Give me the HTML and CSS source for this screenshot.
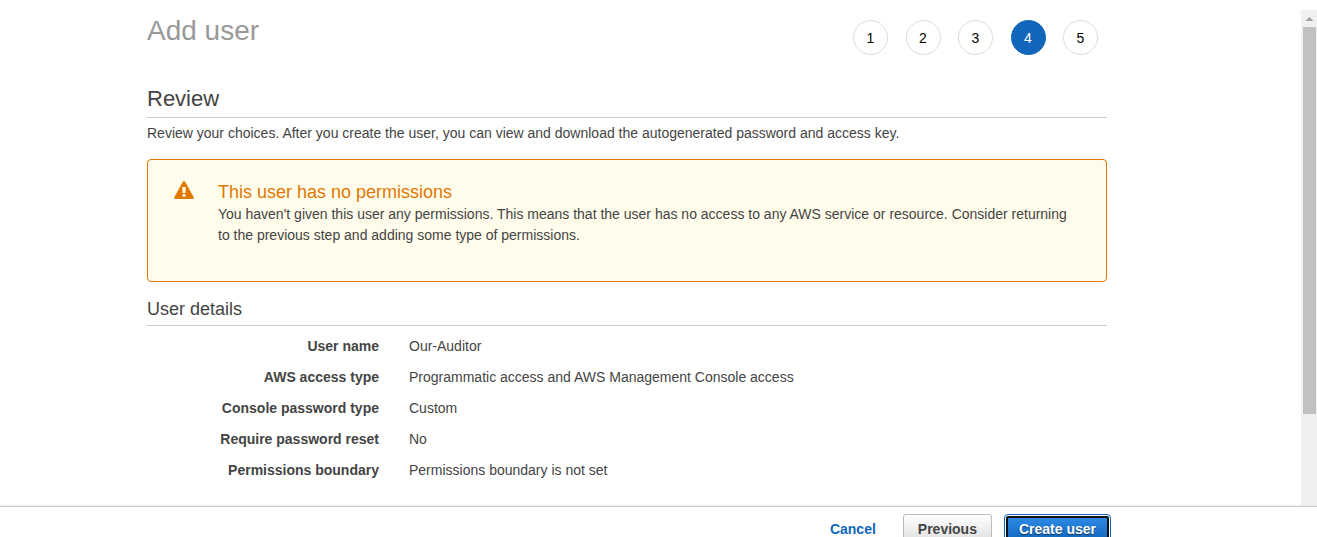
FILE: index.html
```
<!DOCTYPE html>
<html lang="en">
<head>
<meta charset="utf-8">
<meta name="viewport" content="width=device-width, initial-scale=1">
<title>Add user</title>
<link rel="stylesheet" href="styles.css">
</head>
<body>
<div class="viewport">
  <main class="content">
    <header class="page-header">
      <h1 class="page-title">Add user</h1>
      <ol class="steps">
        <li class="step">1</li>
        <li class="step">2</li>
        <li class="step">3</li>
        <li class="step step-current" aria-current="step">4</li>
        <li class="step">5</li>
      </ol>
    </header>
    <h2 class="section-title">Review</h2>
    <p class="intro">Review your choices. After you create the user, you can view and download the autogenerated password and access key.</p>
    <section class="alert">
      <svg class="alert-icon" viewBox="0 0 20 18" aria-hidden="true">
        <path fill="#e07700" fill-rule="evenodd" d="M8.7 1.1Q10-.9 11.3 1.1L19.7 16.2Q20.3 18 18.4 18H1.6Q-.3 18 .3 16.2ZM8.2 6l.4 6h2.8l.4-6ZM8.5 13v2.8h3v-2.8Z"/>
      </svg>
      <div class="alert-body">
        <h3 class="alert-title">This user has no permissions</h3>
        <p class="alert-text">You haven't given this user any permissions. This means that the user has no access to any AWS service or resource. Consider returning to the previous step and adding some type of permissions.</p>
      </div>
    </section>
    <h3 class="details-title">User details</h3>
    <dl class="details">
      <dt>User name</dt><dd>Our-Auditor</dd>
      <dt>AWS access type</dt><dd>Programmatic access and AWS Management Console access</dd>
      <dt>Console password type</dt><dd>Custom</dd>
      <dt>Require password reset</dt><dd>No</dd>
      <dt>Permissions boundary</dt><dd>Permissions boundary is not set</dd>
    </dl>
  </main>
  <div class="scrollbar" aria-hidden="true">
    <svg class="scroll-arrow" viewBox="0 0 7 4" shape-rendering="crispEdges"><path fill="#a3a3a3" d="M3 0h1v1h1v1h1v1h1v1H0V3h1V2h1V1h1z"/></svg>
    <div class="scroll-thumb"></div>
  </div>
</div>
<footer class="actions">
  <div class="actions-inner">
    <a class="cancel" href="#">Cancel</a>
    <button class="button" type="button">Previous</button>
    <button class="button button-primary" type="button">Create user</button>
  </div>
</footer>
</body>
</html>
```

FILE: styles.css
```
* { box-sizing: border-box; }

body {
  margin: 0;
  padding-top: 10px;
  height: 100vh;
  overflow: hidden;
  display: flex;
  flex-direction: column;
  background: #fff;
  color: #444;
  font: 14px/21px "Liberation Sans", Arial, sans-serif;
}

h1, h2, h3, p, dl, dd, ol { margin: 0; padding: 0; font-weight: 400; }

.viewport {
  flex: 1;
  min-height: 0;
  display: flex;
}

.content {
  flex: 1;
  min-width: 0;
  overflow: hidden;
  padding: 0 194px 0 147px;
}

.page-header {
  display: flex;
  justify-content: space-between;
  align-items: flex-start;
}

.page-title {
  font-size: 28px;
  line-height: 42px;
  color: #999;
}

.steps {
  display: flex;
  justify-content: space-between;
  width: 245px;
  margin: 10px 9px 0 0;
  list-style: none;
}

.step {
  width: 35px;
  height: 35px;
  border: 1px solid #ddd;
  border-radius: 50%;
  line-height: 35px;
  text-align: center;
  color: #000;
}

.step-current {
  border-color: #1166bb;
  background: #1166bb;
  color: #fff;
}

.section-title {
  margin-top: 30px;
  padding-bottom: 4px;
  border-bottom: 1px solid #ccc;
  font-size: 22px;
  line-height: 28px;
}

.intro { margin-top: 5px; }

.alert {
  display: flex;
  gap: 24px;
  margin-top: 15px;
  padding: 21px 26px 35px;
  border: 1px solid #e07700;
  border-radius: 4px;
  background: #fffceb;
}

.alert-icon {
  flex: none;
  width: 20px;
  height: 18px;
}

.alert-title {
  font-size: 18px;
  line-height: 23px;
  color: #e07700;
}

.details-title {
  margin-top: 15px;
  padding-bottom: 4px;
  border-bottom: 1px solid #ccc;
  font-size: 18px;
  line-height: 24px;
}

.details {
  display: grid;
  grid-template-columns: 232px 1fr;
  column-gap: 30px;
  row-gap: 10px;
  padding: 10px 0;
}

.details dt {
  font-weight: 700;
  text-align: right;
}

.scrollbar {
  flex: none;
  width: 16px;
  display: flex;
  flex-direction: column;
  align-items: center;
  background: #f0f0f0;
}

.scroll-arrow {
  flex: none;
  width: 7px;
  height: 4px;
  margin: 7px 0 6px;
}

.scroll-thumb {
  width: 13px;
  height: 78%;
  background: #c1c1c1;
}

.actions {
  flex: none;
  height: 31px;
  border-top: 1px solid #ccc;
  box-shadow: 0 -1px 0 #eee;
}

.actions-inner {
  display: flex;
  justify-content: flex-end;
  align-items: flex-start;
  padding: 7px 208px 0 0;
}

.cancel {
  margin-right: 27px;
  line-height: 30px;
  font-weight: 700;
  color: #1166bb;
  text-decoration: none;
}

.button {
  height: 30px;
  padding: 0 14px;
  border: 1px solid #bbb;
  border-radius: 3px;
  background: linear-gradient(#fff, #ddd);
  color: #444;
  font: 700 14px/28px "Liberation Sans", Arial, sans-serif;
}

.button-primary {
  height: 26px;
  margin: 2px 0 0 14px;
  padding: 0 11px;
  border: 2px solid #111;
  border-radius: 2px;
  outline: 1px solid #1166bb;
  outline-offset: 1px;
  background: linear-gradient(#2e8ae6, #1166bb);
  color: #fff;
  line-height: 22px;
  text-shadow: 0 1px 1px #00000088;
}
```
